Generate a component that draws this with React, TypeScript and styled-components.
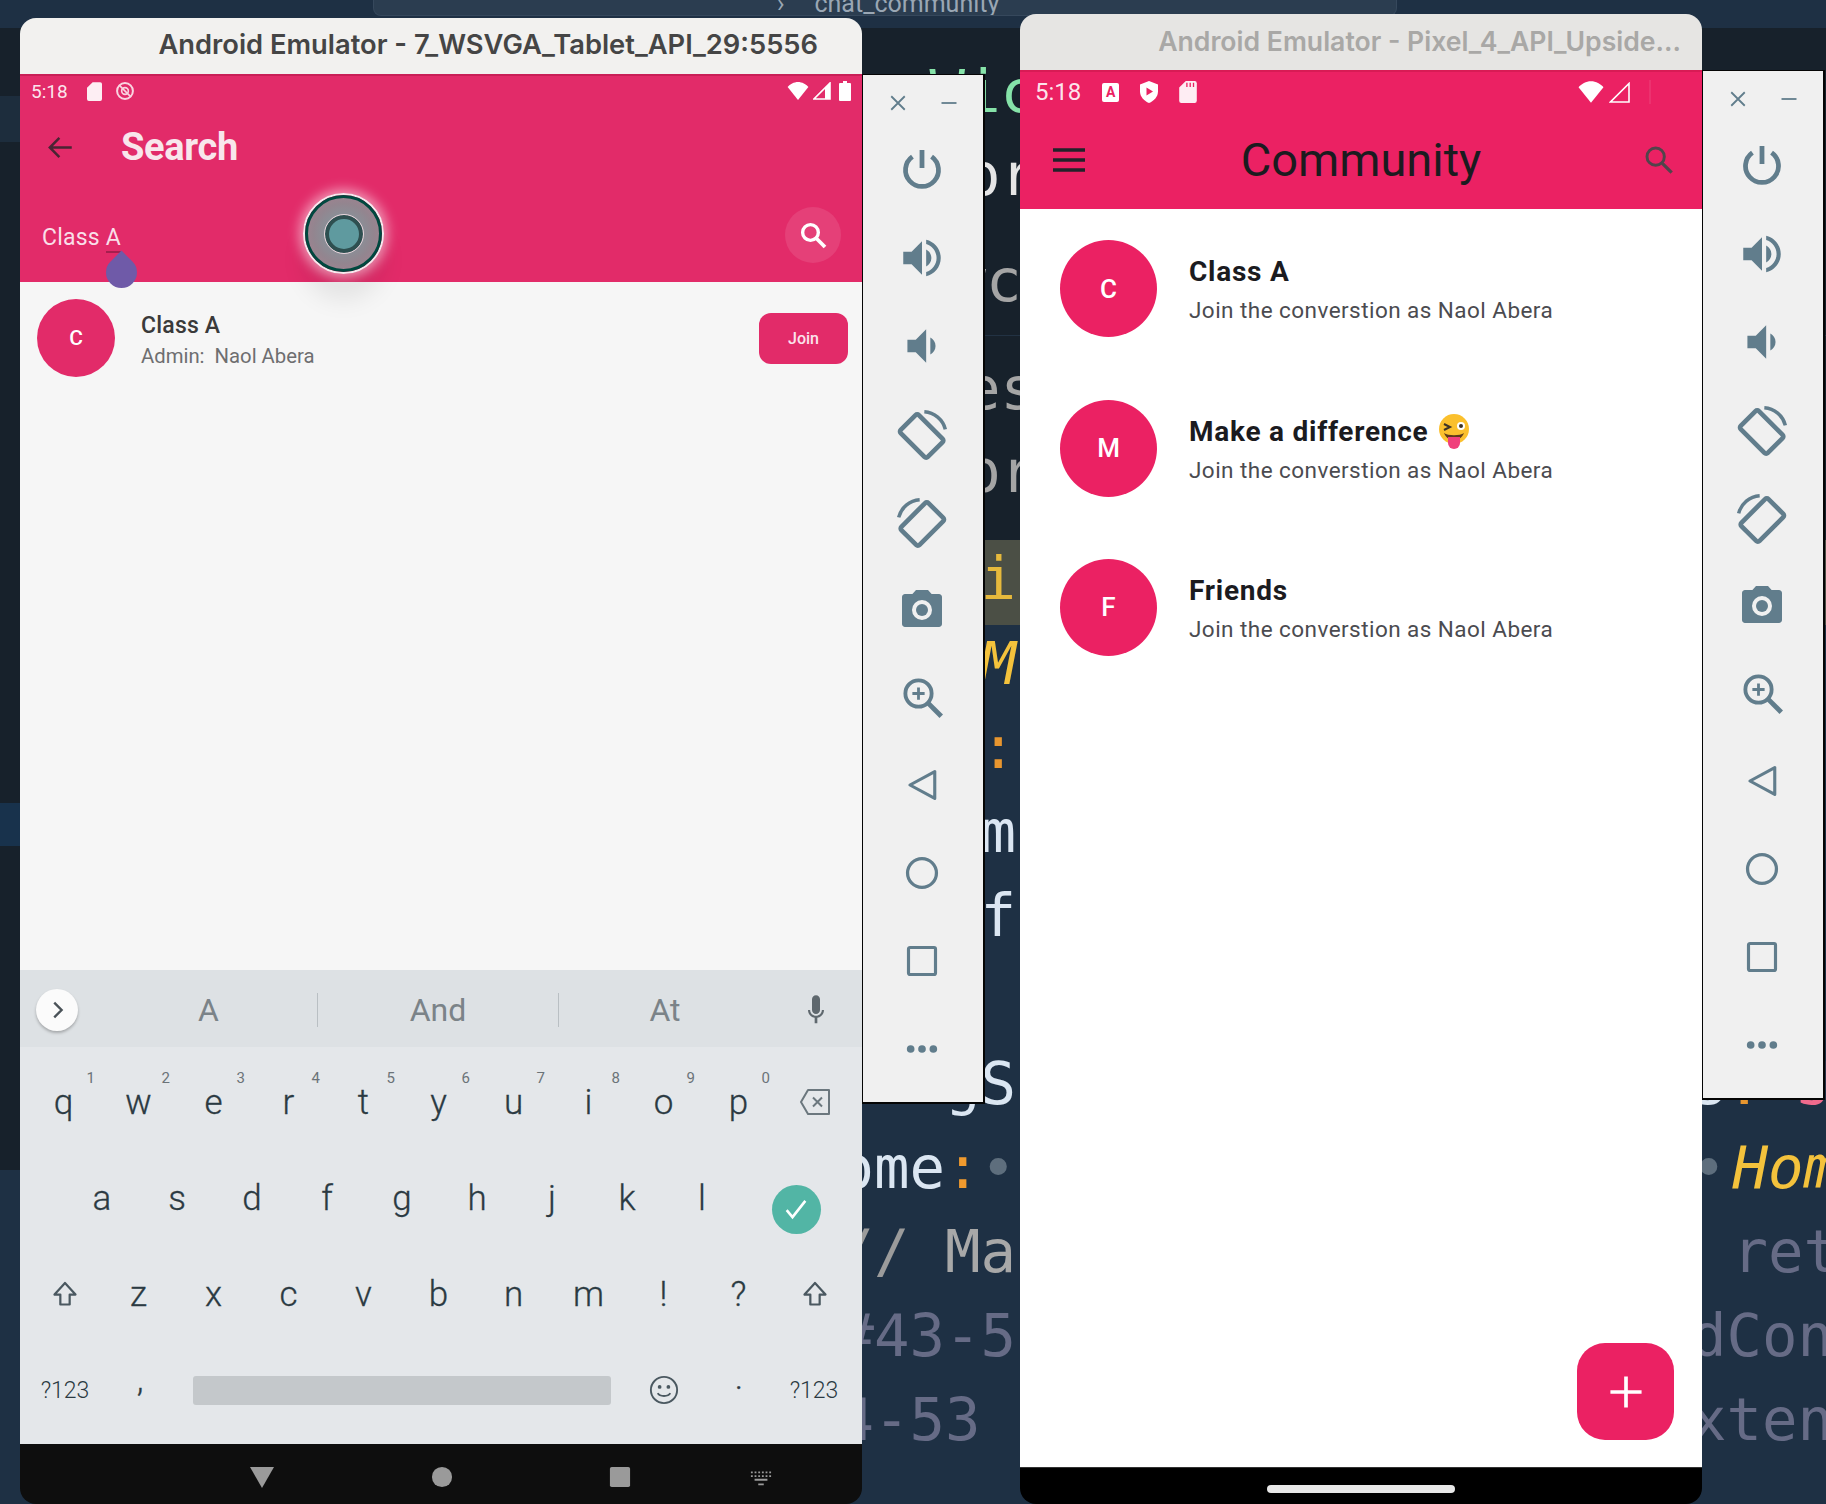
import React from 'react';
import styled, { createGlobalStyle } from 'styled-components';

const PINK_A = '#e22b69';
const PINK_B = '#eb2163';
const SLATE = '#617d8c';

const GlobalStyle = createGlobalStyle`
    html, body {
        margin: 0;
        padding: 0;
        background: #1e3044;
    }
    * {
        box-sizing: border-box;
    }
`;

const Desktop = styled.div`
    position: relative;
    width: 1826px;
    height: 1504px;
    overflow: hidden;
    background: #1e3044;
    font-family: Roboto, 'Liberation Sans', sans-serif;
`;

/* ---------- editor behind the emulators ---------- */

const TabStrip = styled.div`
    height: 28px;
    background: #1e3044;
    padding-left: 373px;
`;

const OpenTab = styled.div`
    width: 1024px;
    height: 16px;
    background: #2b3d50;
    border: 1px solid #36485c;
    border-top: 0;
    border-radius: 0 0 8px 8px;
    overflow: hidden;
    display: flex;
    gap: 30px;
    color: #9aa7b4;
    font-size: 25px;
    line-height: 8px;
    padding-left: 403px;
`;

const HoverPanel = styled.div`
    height: 512px;
    background: #17212b;
    display: flex;
    flex-direction: column;
`;

const HoverTop = styled.div`
    height: 307px;
    padding: 23px 0 0 6px;
`;

const HoverBottom = styled.div`
    flex: 1;
    border-top: 1px solid #223243;
    padding: 18px 0 0 6px;
`;

const CodeLine = styled.div<{ $h: number; $bg?: string }>`
    height: ${(p) => p.$h}px;
    line-height: ${(p) => p.$h}px;
    background: ${(p) => p.$bg || 'transparent'};
    font-family: 'DejaVu Sans Mono', 'Liberation Mono', monospace;
    font-size: 59px;
    white-space: pre;
`;

const EditorLine = styled(CodeLine)`
    padding-left: 21.5px;
    line-height: ${(p) => p.$h - 7}px;
`;

const Tok = styled.span<{ $c: string; $i?: boolean; $shift?: number }>`
    color: ${(p) => p.$c};
    font-style: ${(p) => (p.$i ? 'italic' : 'normal')};
    margin-left: ${(p) => p.$shift || 0}px;
`;

const SideStrip = styled.div`
    position: absolute;
    left: 0;
    top: 28px;
    width: 20px;
    display: flex;
    flex-direction: column;
`;

const SideBand = styled.div<{ $h: number; $bg: string }>`
    height: ${(p) => p.$h}px;
    background: ${(p) => p.$bg};
`;

type Token = { at: number; t: string; c: string; i?: boolean; shift?: number };

const COL_TEXT = '#dbe6f2';
const COL_MUTED = '#666b86';
const COL_GOLD = '#f4c23c';

const renderTokens = (tokens: Token[]) => {
    let col = 0;
    return tokens.map((tok, index) => {
        const gap = ' '.repeat(Math.max(0, tok.at - col));
        col = tok.at + tok.t.length;
        return (
            <React.Fragment key={index}>
                {gap}
                <Tok $c={tok.c} $i={tok.i} $shift={tok.shift}>
                    {tok.t}
                </Tok>
            </React.Fragment>
        );
    });
};

const lowerLines: { h: number; tokens: Token[] }[] = [
    { h: 84, tokens: [{ at: 27, t: 'M', c: COL_GOLD, i: true }] },
    { h: 84, tokens: [{ at: 27, t: ':', c: '#e8962f' }] },
    { h: 84, tokens: [{ at: 27, t: 'm', c: COL_TEXT }] },
    { h: 84, tokens: [{ at: 27, t: 'f', c: COL_TEXT }] },
    { h: 84, tokens: [] },
    {
        h: 84,
        tokens: [
            { at: 26, t: 'gS', c: COL_TEXT },
            { at: 47, t: 'S', c: COL_TEXT },
            { at: 48, t: ':', c: '#e8962f' },
            { at: 50, t: 'J', c: '#f06a8c' },
        ],
    },
    {
        h: 84,
        tokens: [
            { at: 22, t: 'home', c: COL_TEXT },
            { at: 26, t: ':', c: '#f09a2e' },
            { at: 27, t: '•', c: '#5e6e7d' },
            { at: 47, t: '•', c: '#5e6e7d' },
            { at: 48, t: 'Hom', c: COL_GOLD, i: true, shift: 6 },
        ],
    },
    {
        h: 84,
        tokens: [
            { at: 23, t: '//', c: '#9b9b9b' },
            { at: 26, t: 'Ma', c: '#a8a8a8' },
            { at: 48, t: 'ret', c: COL_MUTED, shift: 6 },
        ],
    },
    {
        h: 84,
        tokens: [
            { at: 23, t: '#43-5', c: COL_MUTED },
            { at: 47, t: 'dCon', c: COL_MUTED },
        ],
    },
    {
        h: 84,
        tokens: [
            { at: 23, t: '4-53', c: COL_MUTED },
            { at: 47, t: 'xten', c: COL_MUTED },
        ],
    },
];

const EditorBackdrop: React.FC = () => (
    <>
        <TabStrip>
            <OpenTab>
                <span>›</span>
                <span>chat_community</span>
            </OpenTab>
        </TabStrip>
        <HoverPanel>
            <HoverTop>
                <CodeLine $h={82}>{renderTokens([{ at: 26, t: 'Wic', c: '#86e3a9' }])}</CodeLine>
                <CodeLine $h={84}>{renderTokens([{ at: 27, t: 'or', c: '#e6e6e6' }])}</CodeLine>
                <CodeLine $h={128}>{renderTokens([{ at: 26, t: 'wc', c: '#a5a5a5', shift: 21 }])}</CodeLine>
            </HoverTop>
            <HoverBottom>
                <CodeLine $h={70}>{renderTokens([{ at: 27, t: 'es', c: '#a5a5a5' }])}</CodeLine>
                <CodeLine $h={96}>{renderTokens([{ at: 27, t: 'pr', c: '#a5a5a5' }])}</CodeLine>
            </HoverBottom>
        </HoverPanel>
        <EditorLine $h={85} $bg="#4b4f45">
            {renderTokens([{ at: 27, t: 'i', c: '#e6b93c' }])}
        </EditorLine>
        {lowerLines.map((line, index) => (
            <EditorLine key={index} $h={line.h}>
                {renderTokens(line.tokens)}
            </EditorLine>
        ))}
        <SideStrip>
            <SideBand $h={68} $bg="#17212b" />
            <SideBand $h={46} $bg="#1d2d3d" />
            <SideBand $h={661} $bg="#17212b" />
            <SideBand $h={43} $bg="#18324c" />
            <SideBand $h={324} $bg="#17212b" />
        </SideStrip>
    </>
);

/* ---------- emulator window ---------- */

const EmulatorWindow = styled.div<{ $x: number; $y: number; $w: number }>`
    position: absolute;
    left: ${(p) => p.$x}px;
    top: ${(p) => p.$y}px;
    width: ${(p) => p.$w}px;
    height: ${(p) => 1504 - p.$y}px;
    border-radius: 16px;
    overflow: hidden;
    display: flex;
    flex-direction: column;
`;

const TitleBar = styled.div<{ $muted?: boolean }>`
    height: 56px;
    flex-shrink: 0;
    background: ${(p) => (p.$muted ? '#e6e5e3' : '#f2f1ef')};
    color: ${(p) => (p.$muted ? '#a9a8a6' : '#454545')};
    font-family: Inter, Roboto, sans-serif;
    font-size: ${(p) => (p.$muted ? 26.6 : 27.3)}px;
    font-weight: 600;
    line-height: 54px;
    text-align: right;
    padding-right: ${(p) => (p.$muted ? '21px' : '44px')};
    white-space: nowrap;
`;

const Header = styled.header<{ $bg: string; $edge: string; $h: number }>`
    height: ${(p) => p.$h}px;
    flex-shrink: 0;
    background: ${(p) => p.$bg};
    border-top: 2px solid ${(p) => p.$edge};
    position: relative;
`;

const StatusBar = styled.div<{ $h: number; $pad: number; $size: number }>`
    height: ${(p) => p.$h}px;
    display: flex;
    align-items: center;
    padding: 0 ${(p) => p.$pad}px;
    color: rgba(255, 255, 255, 0.9);
    font-size: ${(p) => p.$size}px;
`;

const StatusGroup = styled.div<{ $gap: number; $left?: number; $right?: number }>`
    display: flex;
    align-items: center;
    gap: ${(p) => p.$gap}px;
    margin-left: ${(p) => p.$left || 0}px;
    margin-right: ${(p) => p.$right || 0}px;
`;

const Spacer = styled.div`
    flex: 1;
`;

const StatusBadge = styled.span`
    width: 17px;
    height: 19px;
    border-radius: 2px;
    background: #fff;
    color: ${PINK_B};
    font-size: 14px;
    font-weight: 700;
    line-height: 18px;
    text-align: center;
`;

const FaintBar = styled.span`
    width: 2px;
    height: 24px;
    margin-left: 14px;
    background: rgba(255, 255, 255, 0.08);
`;

const BatterySlot = styled.div`
    margin-left: 4px;
`;

const TabletAppBar = styled.div`
    height: 82px;
    display: flex;
    align-items: center;
    padding-left: 27px;
`;

const TabletTitle = styled.h1`
    margin: 0 0 0 47px;
    color: #f8e6ec;
    font-size: 38px;
    font-weight: 700;
    letter-spacing: -0.3px;
`;

const SearchRow = styled.div`
    height: 94px;
    display: flex;
    align-items: center;
    padding: 0 21px 0 22px;
`;

const SearchText = styled.div`
    flex: 1;
    color: #f9dfe8;
    font-size: 23px;
    letter-spacing: 0.2px;
    padding-top: 4px;
`;

const Composing = styled.span`
    border-bottom: 2px solid #a51f4e;
`;

const SearchButton = styled.button`
    width: 56px;
    height: 56px;
    border: 0;
    padding: 0;
    border-radius: 50%;
    background: rgba(255, 255, 255, 0.1);
    display: flex;
    align-items: center;
    justify-content: center;
`;

const CaretHandle = styled.div`
    position: absolute;
    left: 86px;
    top: 181px;
    width: 31px;
    height: 31px;
    background: #6f5aa8;
    border-radius: 50% 0 50% 50%;
    transform: rotate(-45deg);
    z-index: 2;
`;

const TouchIndicator = styled.div`
    position: absolute;
    left: 283px;
    top: 117px;
    width: 81px;
    height: 81px;
    border-radius: 50%;
    border: 2px solid #f6e9ee;
    box-shadow: 0 0 12px 4px rgba(255, 255, 255, 0.5), 0 26px 24px rgba(0, 0, 0, 0.08);
    z-index: 2;
`;

const TouchRing = styled.div`
    width: 100%;
    height: 100%;
    border-radius: 50%;
    border: 3px solid #00483f;
    background: radial-gradient(circle, #7c9fa4 0%, #93858f 60%, #ad7f91 100%);
    display: flex;
    align-items: center;
    justify-content: center;
`;

const TouchCore = styled.div`
    width: 38px;
    height: 38px;
    border-radius: 50%;
    background: #5f9a9f;
    border: 4px solid #2e4f50;
    outline: 1px solid #e8d5dc;
`;

const TabletContent = styled.div`
    flex: 1;
    background: #f6f6f6;
`;

const TabletRow = styled.div`
    display: flex;
    align-items: center;
    padding: 17px 14px 0 17px;
`;

const Avatar = styled.div<{ $d: number; $bg: string; $size: number }>`
    width: ${(p) => p.$d}px;
    height: ${(p) => p.$d}px;
    flex-shrink: 0;
    border-radius: 50%;
    background: ${(p) => p.$bg};
    color: #fff;
    font-size: ${(p) => p.$size}px;
    font-weight: 500;
    display: flex;
    align-items: center;
    justify-content: center;
`;

const TabletInfo = styled.div`
    flex: 1;
    margin-left: 26px;
    padding-top: 6px;
`;

const TabletName = styled.div`
    color: #3a3a3a;
    font-size: 23px;
    font-weight: 500;
    letter-spacing: 0.2px;
    line-height: 30px;
`;

const TabletSub = styled.div`
    color: #6e6e70;
    font-size: 20.3px;
    line-height: 30px;
    white-space: pre;
`;

const JoinButton = styled.button`
    width: 89px;
    height: 51px;
    border: 0;
    border-radius: 12px;
    background: ${PINK_A};
    color: #fbe3eb;
    font-family: inherit;
    font-size: 16px;
    font-weight: 500;
`;

/* ---------- keyboard ---------- */

const Keyboard = styled.div`
    height: 474px;
    flex-shrink: 0;
    background: #e4e7ea;
`;

const Suggestions = styled.div`
    height: 77px;
    background: #dde1e4;
    display: flex;
    align-items: center;
    color: #7b8388;
    font-size: 32px;
    padding-top: 2px;
`;

const ExpandChip = styled.div`
    width: 42px;
    height: 42px;
    margin-left: 16px;
    border-radius: 50%;
    background: #fbfbfb;
    box-shadow: 0 2px 3px rgba(0, 0, 0, 0.25);
    display: flex;
    align-items: center;
    justify-content: center;
`;

const Suggestion = styled.div<{ $w: number; $div?: boolean; $pl?: number }>`
    width: ${(p) => p.$w}px;
    height: 34px;
    line-height: 34px;
    text-align: center;
    padding-left: ${(p) => p.$pl || 0}px;
    border-right: ${(p) => (p.$div ? '1px solid #b9bfc3' : '0')};
`;

const MicSlot = styled.div`
    margin-left: 29px;
`;

const KeyRows = styled.div`
    padding: 7px 0 0 7.5px;
`;

const KeyRow = styled.div`
    height: 96px;
    display: flex;
    align-items: center;
`;

const Key = styled.div<{ $w?: number; $ml?: number; $small?: boolean; $lift?: number; $lean?: boolean }>`
    position: relative;
    width: ${(p) => p.$w || 75}px;
    margin-left: ${(p) => p.$ml || 0}px;
    height: 100%;
    flex-shrink: 0;
    display: flex;
    align-items: center;
    justify-content: center;
    padding-bottom: ${(p) => p.$lift || 0}px;
    padding-right: ${(p) => (p.$lean ? 3 : 0)}px;
    color: #2b3a42;
    font-size: ${(p) => (p.$small ? 23 : 35)}px;
    font-weight: 300;
    -webkit-text-stroke: ${(p) => (p.$small ? 0 : 0.3)}px;
`;

const KeyHint = styled.sup`
    position: absolute;
    left: 59px;
    top: 16px;
    color: #6b7378;
    font-size: 15px;
    line-height: 16px;
    font-weight: 400;
    -webkit-text-stroke: 0;
`;

const SpaceBar = styled.div`
    width: 418px;
    height: 29px;
    margin-left: 15.5px;
    border-radius: 3px;
    background: #c4c8cb;
`;

const DoneCircle = styled.div`
    width: 49px;
    height: 49px;
    margin-top: 22px;
    border-radius: 50%;
    background: #52b5a5;
    display: flex;
    align-items: center;
    justify-content: center;
`;

const TabletNav = styled.div`
    height: 60px;
    flex-shrink: 0;
    background: #0e0e0e;
    display: flex;
    align-items: center;
    padding-top: 6px;
`;

const NavSlot = styled.div<{ $x: number }>`
    position: absolute;
    left: ${(p) => p.$x}px;
`;

const NavIcons = styled.div`
    position: relative;
    display: flex;
    align-items: center;
    height: 24px;
    width: 100%;
`;

/* ---------- phone ---------- */

const PhoneAppBar = styled.div`
    height: 95px;
    display: flex;
    align-items: center;
    justify-content: space-between;
    padding: 0 27px 0 32px;
`;

const PhoneTitle = styled.h1`
    margin: 0 7px 0 0;
    color: #1b1b1f;
    font-size: 47px;
    font-weight: 400;
`;

const PhoneContent = styled.div`
    flex: 1;
    position: relative;
    background: #fff;
`;

const PhoneRow = styled.div`
    height: 159.4px;
    display: flex;
    align-items: center;
    padding-left: 40px;
`;

const PhoneInfo = styled.div`
    margin-left: 32px;
    padding-top: 3px;
`;

const PhoneName = styled.div`
    display: flex;
    align-items: center;
    gap: 10px;
    color: #1b1b1f;
    font-size: 28px;
    font-weight: 700;
    letter-spacing: 0.75px;
    line-height: 36px;
`;

const PhoneSub = styled.div`
    color: #4b4b50;
    font-size: 22.5px;
    letter-spacing: 0.45px;
    line-height: 32px;
    margin-top: 4px;
`;

const Fab = styled.button`
    position: absolute;
    right: 28px;
    bottom: 27px;
    width: 97px;
    height: 97px;
    border: 0;
    border-radius: 28px;
    background: ${PINK_B};
    display: flex;
    align-items: center;
    justify-content: center;
`;

const GestureBar = styled.div`
    height: 37px;
    flex-shrink: 0;
    background: #000;
    border-top: 1px solid #333;
    display: flex;
    justify-content: center;
    padding-top: 17px;
`;

const HomePill = styled.div`
    width: 188px;
    height: 8px;
    border-radius: 4px;
    background: #e8e8e8;
`;

/* ---------- emulator side toolbar ---------- */

const ToolPanel = styled.aside<{ $x: number; $y: number }>`
    position: absolute;
    left: ${(p) => p.$x}px;
    top: ${(p) => p.$y}px;
    width: 123px;
    height: 1030px;
    background: #f0f0f0;
    border: solid #050505;
    border-width: 1px 2px 2px 1px;
    display: flex;
    flex-direction: column;
    align-items: center;
`;

const ToolHeader = styled.div`
    width: 100%;
    height: 51px;
    display: flex;
    align-items: center;
    justify-content: space-between;
    padding: 5px 25px 0 26px;
`;

const ToolCell = styled.div`
    width: 60px;
    height: 87.9px;
    flex-shrink: 0;
    margin-right: 2px;
    display: flex;
    align-items: center;
    justify-content: center;
`;

/* ---------- drawings ---------- */

const Svg: React.FC<{ w: number; h?: number; vb?: string; children: React.ReactNode }> = ({ w, h, vb, children }) => (
    <svg width={w} height={h ?? w} viewBox={vb ?? '0 0 24 24'} style={{ display: 'block' }}>
        {children}
    </svg>
);

const toolIcons: React.ReactNode[] = [
    <Svg w={46} key="power">
        <path d="M7 5a8.600 8.600 0 1 0 10 0M12 1.500v9.500" fill="none" stroke={SLATE} strokeWidth={2.5} />
    </Svg>,
    <Svg w={50} key="up">
        <path
            fill={SLATE}
            d="M3 9v6h4l5 5V4L7 9H3zm13.5 3c0-1.77-1.02-3.29-2.5-4.03v8.05c1.48-.73 2.5-2.25 2.5-4.02zM14 3.23v2.06c2.89.86 5 3.54 5 6.71s-2.11 5.85-5 6.71v2.06c4.01-.91 7-4.49 7-8.77s-2.99-7.86-7-8.77z"
        />
    </Svg>,
    <Svg w={50} key="down">
        <path fill={SLATE} d="M18.5 12c0-1.77-1.02-3.29-2.5-4.03v8.05c1.48-.73 2.5-2.25 2.5-4.02zM5 9v6h4l5 5V4L9 9H5z" />
    </Svg>,
    <Svg w={56} key="rotr">
        <g fill="none" stroke={SLATE}>
            <rect x="6.5" y="4.6" width="11" height="16.4" rx="1" strokeWidth={2} transform="rotate(-45 12 13)" />
            <path d="M13 2.500a10 10 0 0 1 9 7.500" strokeWidth={1.5} />
        </g>
    </Svg>,
    <Svg w={56} key="rotl">
        <g fill="none" stroke={SLATE}>
            <rect x="6.5" y="4.6" width="11" height="16.4" rx="1" strokeWidth={2} transform="rotate(45 12 13)" />
            <path d="M11 2.500a10 10 0 0 0-9 7.500" strokeWidth={1.5} />
        </g>
    </Svg>,
    <Svg w={48} key="cam">
        <path
            fill={SLATE}
            fillRule="evenodd"
            d="M9 2.5L7.2 4.5H3.5C2.7 4.5 2 5.2 2 6v13.5c0 .8.7 1.5 1.5 1.5h17c.8 0 1.5-.7 1.5-1.5V6c0-.8-.7-1.5-1.5-1.5h-3.7L15 2.5H9zm3 15a5 5 0 1 1 0-10 5 5 0 0 1 0 10z"
        />
        <circle cx="12" cy="12.5" r="3" fill={SLATE} />
    </Svg>,
    <Svg w={42} key="zoom">
        <g fill="none" stroke={SLATE} strokeWidth={2.2}>
            <circle cx="10" cy="10" r="7.5" />
            <path d="M15.5 15.5L23 23" strokeWidth={2.8} />
            <path d="M10 6.5v7M6.5 10h7" strokeWidth={1.6} />
        </g>
    </Svg>,
    <Svg w={34} key="back">
        <path d="M21 2.5v19L3.5 12z" fill="none" stroke={SLATE} strokeWidth={2.2} strokeLinejoin="round" />
    </Svg>,
    <Svg w={34} key="home">
        <circle cx="12" cy="12" r="10.2" fill="none" stroke={SLATE} strokeWidth={2.3} />
    </Svg>,
    <Svg w={36} key="recent">
        <rect x="3" y="3" width="18" height="18" rx="1" fill="none" stroke={SLATE} strokeWidth={2.1} />
    </Svg>,
    <Svg w={34} key="more">
        <g fill={SLATE}>
            <circle cx="4" cy="12" r="2.7" />
            <circle cx="12" cy="12" r="2.7" />
            <circle cx="20" cy="12" r="2.7" />
        </g>
    </Svg>,
];

const SidePanel: React.FC<{ x: number; y: number }> = ({ x, y }) => (
    <ToolPanel $x={x} $y={y}>
        <ToolHeader>
            <Svg w={18}>
                <path d="M3 3l18 18M21 3L3 21" stroke={SLATE} strokeWidth={2.4} />
            </Svg>
            <Svg w={18}>
                <path d="M2 12h20" stroke={SLATE} strokeWidth={2.4} />
            </Svg>
        </ToolHeader>
        {toolIcons.map((icon, index) => (
            <ToolCell key={index}>{icon}</ToolCell>
        ))}
    </ToolPanel>
);

const SearchGlyph: React.FC<{ w: number; color: string; sw?: number }> = ({ w, color, sw = 2.2 }) => (
    <Svg w={w}>
        <circle cx="9.5" cy="9.5" r="6.5" fill="none" stroke={color} strokeWidth={sw} />
        <path d="M14.5 14.5L21.5 21.5" stroke={color} strokeWidth={sw + 0.3} />
    </Svg>
);

const SdCard: React.FC<{ w: number; h: number; notch?: boolean }> = ({ w, h, notch }) => (
    <Svg w={w} h={h} vb="0 0 16 20">
        <path d="M6 0h8a2 2 0 0 1 2 2v16a2 2 0 0 1-2 2H2a2 2 0 0 1-2-2V6z" fill="#fff" fillOpacity={0.92} />
        {notch && <path d="M7 1.5v4M10 1.5v4M13 1.5v4" stroke={PINK_B} strokeWidth={1.2} />}
    </Svg>
);

const WifiFan: React.FC<{ w: number; h: number }> = ({ w, h }) => (
    <Svg w={w} h={h} vb="0 0 24 20">
        <path d="M12 20L0.5 5.5C3 2.5 7.5 0 12 0s9 2.5 11.5 5.5z" fill="#fff" />
    </Svg>
);

const WinkEmoji: React.FC = () => (
    <Svg w={32} h={36} vb="0 0 32 36">
        <circle cx="16" cy="15" r="15" fill="#fbc02d" />
        <path d="M6 10l6 3-6 3" fill="none" stroke="#3d3326" strokeWidth={2} />
        <circle cx="23" cy="12" r="4" fill="#fff" />
        <circle cx="23" cy="12" r="2" fill="#3d3326" />
        <path d="M6 19c4 3 16 3 20 0-2 5-6 7-10 7s-8-2-10-7z" fill="#5d3a1a" />
        <path d="M10 23h12v6a6 6 0 0 1-12 0z" fill="#f0407c" />
    </Svg>
);

/* ---------- screens ---------- */

const topRow = 'qwertyuiop'.split('');
const hints = '1234567890'.split('');
const midRow = 'asdfghjkl'.split('');
const lowRow = 'zxcvbnm!?'.split('');

const ShiftGlyph: React.FC = () => (
    <Svg w={28}>
        <path d="M12 2.5L3 12.5h5v8.5h8v-8.5h5z" fill="none" stroke="#4a5860" strokeWidth={1.9} strokeLinejoin="round" />
    </Svg>
);

const TabletScreen: React.FC = () => (
    <>
        <Header $bg={PINK_A} $edge="#c91f57" $h={208}>
            <StatusBar $h={30} $pad={11} $size={19}>
                5:18
                <StatusGroup $gap={13} $left={19}>
                    <SdCard w={15} h={19} />
                    <Svg w={20}>
                        <circle cx="12" cy="12" r="9.5" fill="none" stroke="#f9d4e0" strokeWidth={2.4} />
                        <circle cx="12" cy="12" r="4" fill="none" stroke="#f9d4e0" strokeWidth={2} />
                        <path d="M5 5l14 14" stroke="#f9d4e0" strokeWidth={2} />
                    </Svg>
                </StatusGroup>
                <Spacer />
                <StatusGroup $gap={4}>
                    <WifiFan w={22} h={18} />
                    <Svg w={18} h={18} vb="0 0 18 18">
                        <path d="M17 1v16H1z" fill="none" stroke="#fff" strokeWidth={1.6} />
                        <path d="M12 6v11h5V1z" fill="#fff" />
                    </Svg>
                    <BatterySlot>
                        <Svg w={12} h={20} vb="0 0 12 20">
                            <path d="M4 0h4v2h3a1 1 0 0 1 1 1v16a1 1 0 0 1-1 1H1a1 1 0 0 1-1-1V3a1 1 0 0 1 1-1h3z" fill="#fff" />
                        </Svg>
                    </BatterySlot>
                </StatusGroup>
            </StatusBar>
            <TabletAppBar>
                <Svg w={27}>
                    <path d="M22 12H3M11 3.5L2.5 12l8.5 8.5" fill="none" stroke="#4a2433" strokeWidth={2.2} />
                </Svg>
                <TabletTitle>Search</TabletTitle>
            </TabletAppBar>
            <SearchRow>
                <SearchText>
                    Class <Composing>A</Composing>
                </SearchText>
                <SearchButton>
                    <SearchGlyph w={29} color="#fff" sw={2.8} />
                </SearchButton>
            </SearchRow>
            <CaretHandle />
            <TouchIndicator>
                <TouchRing>
                    <TouchCore />
                </TouchRing>
            </TouchIndicator>
        </Header>
        <TabletContent>
            <TabletRow>
                <Avatar $d={78} $bg={PINK_A} $size={21}>
                    C
                </Avatar>
                <TabletInfo>
                    <TabletName>Class A</TabletName>
                    <TabletSub>Admin:  Naol Abera</TabletSub>
                </TabletInfo>
                <JoinButton>Join</JoinButton>
            </TabletRow>
        </TabletContent>
        <Keyboard>
            <Suggestions>
                <ExpandChip>
                    <Svg w={22}>
                        <path d="M9 4l8 8-8 8" fill="none" stroke="#4a5258" strokeWidth={2.6} />
                    </Svg>
                </ExpandChip>
                <Suggestion $w={240} $div $pl={22}>
                    A
                </Suggestion>
                <Suggestion $w={241} $div>
                    And
                </Suggestion>
                <Suggestion $w={212}>At</Suggestion>
                <MicSlot>
                    <Svg w={32}>
                        <path
                            fill="#5f686e"
                            d="M12 15c1.7 0 3-1.3 3-3V4c0-1.7-1.3-3-3-3S9 2.3 9 4v8c0 1.7 1.3 3 3 3zm6-3c0 3.1-2.4 5.5-5 5.9V22h-2v-4.1C8.4 17.5 6 15.1 6 12h1.6c0 2.6 2.1 4.3 4.4 4.3s4.400-1.700 4.400-4.300z"
                        />
                    </Svg>
                </MicSlot>
            </Suggestions>
            <KeyRows>
                <KeyRow>
                    {topRow.map((letter, index) => (
                        <Key key={letter} $lean>
                            {letter}
                            <KeyHint>{hints[index]}</KeyHint>
                        </Key>
                    ))}
                    <Key>
                        <Svg w={32} h={28} vb="0 0 32 28">
                            <path d="M9 2h21v24H9L2 14z" fill="none" stroke="#6b777e" strokeWidth={2} strokeLinejoin="round" />
                            <path d="M14 9.500l9 9M23 9.500l-9 9" stroke="#6b777e" strokeWidth={2} />
                        </Svg>
                    </Key>
                </KeyRow>
                <KeyRow>
                    {midRow.map((letter, index) => (
                        <Key key={letter} $ml={index === 0 ? 37 : 0}>
                            {letter}
                        </Key>
                    ))}
                    <Key $w={113}>
                        <DoneCircle>
                            <Svg w={28}>
                                <path d="M4 13l5 6L20 5" fill="none" stroke="#fff" strokeWidth={2.2} />
                            </Svg>
                        </DoneCircle>
                    </Key>
                </KeyRow>
                <KeyRow>
                    <Key>
                        <ShiftGlyph />
                    </Key>
                    {lowRow.map((letter) => (
                        <Key key={letter} $lean>
                            {letter}
                        </Key>
                    ))}
                    <Key>
                        <ShiftGlyph />
                    </Key>
                </KeyRow>
                <KeyRow>
                    <Key $small>?123</Key>
                    <Key $lift={22}>,</Key>
                    <SpaceBar />
                    <Key $ml={15.5}>
                        <Svg w={30}>
                            <circle cx="12" cy="12" r="10.5" fill="none" stroke="#4a5860" strokeWidth={1.5} />
                            <circle cx="8.5" cy="9.5" r="1.5" fill="#4a5860" />
                            <circle cx="15.500" cy="9.5" r="1.5" fill="#4a5860" />
                            <path d="M7 14.500c1.500 3 8.500 3 10 0" fill="none" stroke="#4a5860" strokeWidth={1.5} />
                        </Svg>
                    </Key>
                    <Key $lift={26}>.</Key>
                    <Key $small>?123</Key>
                </KeyRow>
            </KeyRows>
        </Keyboard>
        <TabletNav>
            <NavIcons>
                <NavSlot $x={229}>
                    <Svg w={26} h={24} vb="0 0 26 24">
                        <path d="M1 2h24L13 23z" fill="#9a9a9a" />
                    </Svg>
                </NavSlot>
                <NavSlot $x={411}>
                    <Svg w={22}>
                        <circle cx="12" cy="12" r="11" fill="#9a9a9a" />
                    </Svg>
                </NavSlot>
                <NavSlot $x={589}>
                    <Svg w={22}>
                        <rect x="1" y="1" width="22" height="22" rx="2" fill="#9a9a9a" />
                    </Svg>
                </NavSlot>
                <NavSlot $x={730}>
                    <Svg w={22}>
                        <path
                            d="M1 6h2v2H1zM5 6h2v2H5zM9 6h2v2H9zM13 6h2v2h-2zM17 6h2v2h-2zM21 6h2v2h-2zM1 10h2v2H1zM5 10h2v2H5zM9 10h2v2H9zM13 10h2v2h-2zM17 10h2v2h-2zM21 10h2v2h-2zM5 14h14v2H5zM9 19h6v2H9z"
                            fill="#9a9a9a"
                        />
                    </Svg>
                </NavSlot>
            </NavIcons>
        </TabletNav>
    </>
);

const rooms = [
    { letter: 'C', name: 'Class A' },
    { letter: 'M', name: 'Make a difference', emoji: true },
    { letter: 'F', name: 'Friends' },
];

const PhoneScreen: React.FC = () => (
    <>
        <Header $bg={PINK_B} $edge="#d81b55" $h={139}>
            <StatusBar $h={40} $pad={15} $size={24}>
                5:18
                <StatusGroup $gap={18} $left={21}>
                    <StatusBadge>A</StatusBadge>
                    <Svg w={24}>
                        <path d="M12 1l9 3.500v7c0 5-4 9.500-9 11.500-5-2-9-6.500-9-11.500v-7z" fill="#fff" />
                        <path d="M9.500 7.500v8l6.500-4z" fill={PINK_B} />
                    </Svg>
                    <SdCard w={18} h={22} notch />
                </StatusGroup>
                <Spacer />
                <StatusGroup $gap={5} $right={36}>
                    <WifiFan w={26} h={22} />
                    <Svg w={21} h={21} vb="0 0 21 21">
                        <path d="M20 1.500V20H1.500z" fill="none" stroke="#fff" strokeWidth={1.6} />
                    </Svg>
                    <FaintBar />
                </StatusGroup>
            </StatusBar>
            <PhoneAppBar>
                <Svg w={34} h={28} vb="0 0 34 28">
                    <path d="M1 4h32M1 14h32M1 24h32" stroke="#22222a" strokeWidth={3.4} />
                </Svg>
                <PhoneTitle>Community</PhoneTitle>
                <SearchGlyph w={32} color="#51444b" />
            </PhoneAppBar>
        </Header>
        <PhoneContent>
            {rooms.map((room) => (
                <PhoneRow key={room.letter}>
                    <Avatar $d={97} $bg={PINK_B} $size={26}>
                        {room.letter}
                    </Avatar>
                    <PhoneInfo>
                        <PhoneName>
                            {room.name}
                            {room.emoji && <WinkEmoji />}
                        </PhoneName>
                        <PhoneSub>Join the converstion as Naol Abera</PhoneSub>
                    </PhoneInfo>
                </PhoneRow>
            ))}
            <Fab>
                <Svg w={34}>
                    <path d="M12 1v22M1 12h22" stroke="#fff" strokeWidth={2.6} />
                </Svg>
            </Fab>
        </PhoneContent>
        <GestureBar>
            <HomePill />
        </GestureBar>
    </>
);

export default function App() {
    return (
        <Desktop>
            <GlobalStyle />
            <EditorBackdrop />
            <SidePanel x={862} y={74} />
            <SidePanel x={1702} y={70} />
            <EmulatorWindow $x={20} $y={18} $w={842}>
                <TitleBar>Android Emulator - 7_WSVGA_Tablet_API_29:5556</TitleBar>
                <TabletScreen />
            </EmulatorWindow>
            <EmulatorWindow $x={1020} $y={14} $w={682}>
                <TitleBar $muted>Android Emulator - Pixel_4_API_Upside...</TitleBar>
                <PhoneScreen />
            </EmulatorWindow>
        </Desktop>
    );
}
